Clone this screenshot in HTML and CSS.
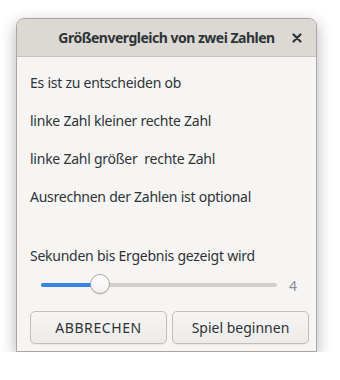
FILE: index.html
```html
<!DOCTYPE html>
<html lang="de">
<head>
  <meta charset="UTF-8">
  <title>Größenvergleich</title>
  <link rel="stylesheet" href="styles.css">
</head>
<body>

  <!-- Dialog -->
  <div class="dialog">
    <div class="titlebar">
      <span class="title">Größenvergleich von zwei Zahlen</span>
      <span class="close">
        <svg width="10" height="10" viewBox="0 0 10 10"><path d="M1.5 1.5 L8.5 8.5 M8.5 1.5 L1.5 8.5" stroke="#2e3436" stroke-width="2.2" stroke-linecap="round"/></svg>
      </span>
    </div>

    <div class="content">
      <p class="line">Es ist zu entscheiden ob</p>
      <p class="line">linke Zahl kleiner rechte Zahl</p>
      <p class="line">linke Zahl größer&nbsp; rechte Zahl</p>
      <p class="line">Ausrechnen der Zahlen ist optional</p>

      <p class="line label">Sekunden bis Ergebnis gezeigt wird</p>

      <div class="slider-row">
        <div class="track">
          <div class="fill" style="width: 59px;"></div>
          <div class="thumb" style="left: 49px;"></div>
        </div>
        <span class="value">4</span>
      </div>

      <div class="buttons">
        <button class="btn caps">ABBRECHEN</button>
        <button class="btn">Spiel beginnen</button>
      </div>
    </div>
  </div>

</body>
</html>
```

FILE: styles.css
```css
:root {
  --title-bg: #dcd8d4;
  --body-bg: #f6f5f4;
  --text-color: #2e3436;
  --accent: #3584e4;
  --border: #b6b2ae;
}

body {
  margin: 0;
  background: #ffffff;
  font-family: 'Noto Sans', 'Open Sans', sans-serif;
  color: var(--text-color);
}

.dialog {
  margin: 18px 0 0 16px;
  width: 301px;
  height: 334px;
  box-sizing: border-box;
  background: var(--body-bg);
  border: 1px solid #a9a5a2;
  border-radius: 8px 8px 0 0;
  box-shadow: 0 5px 16px rgba(0, 0, 0, 0.3);
  display: flex;
  flex-direction: column;
  overflow: hidden;
}

.titlebar {
  height: 37px;
  flex-shrink: 0;
  background: var(--title-bg);
  border-bottom: 1px solid #c7c2be;
  display: flex;
  align-items: center;
  justify-content: center;
  position: relative;
}

.title {
  font-weight: bold;
  font-size: 14px;
  letter-spacing: -0.5px;
}

.close {
  position: absolute;
  right: 14px;
  top: 14px;
  display: flex;
}

.content {
  flex: 1;
  padding: 0 7px 7px 13px;
  display: flex;
  flex-direction: column;
}

.line {
  margin: 0;
  font-size: 14px;
  height: 38px;
  line-height: 38px;
  letter-spacing: -0.25px;
}

.line:first-child {
  margin-top: 7px;
}

.label {
  margin-top: 21px;
}

.slider-row {
  display: flex;
  align-items: center;
  height: 30px;
  margin-top: -5px;
  padding-left: 11px;
}

.track {
  position: relative;
  width: 236px;
  height: 4px;
  border-radius: 2px;
  background: #d3cfcb;
}

.fill {
  position: absolute;
  left: 0;
  top: 0;
  height: 4px;
  border-radius: 2px;
  background: var(--accent);
}

.thumb {
  position: absolute;
  top: -9px;
  width: 20px;
  height: 20px;
  box-sizing: border-box;
  border-radius: 50%;
  border: 1px solid #a8a49f;
  background: linear-gradient(#ffffff, #f2f1f0);
  box-shadow: 0 1px 1px rgba(0, 0, 0, 0.1);
}

.value {
  margin-left: 12px;
  font-size: 14px;
  color: #8b8e8f;
}

.buttons {
  margin-top: auto;
  display: flex;
  gap: 5px;
}

.btn {
  flex: 1;
  height: 33px;
  font-family: inherit;
  font-size: 14px;
  color: var(--text-color);
  border: 1px solid #c2beb9;
  border-radius: 5px;
  background: linear-gradient(#f6f5f4, #edebe9);
  box-shadow: 0 1px 1px rgba(0, 0, 0, 0.05);
}

.btn.caps {
  letter-spacing: 0.6px;
}
```
